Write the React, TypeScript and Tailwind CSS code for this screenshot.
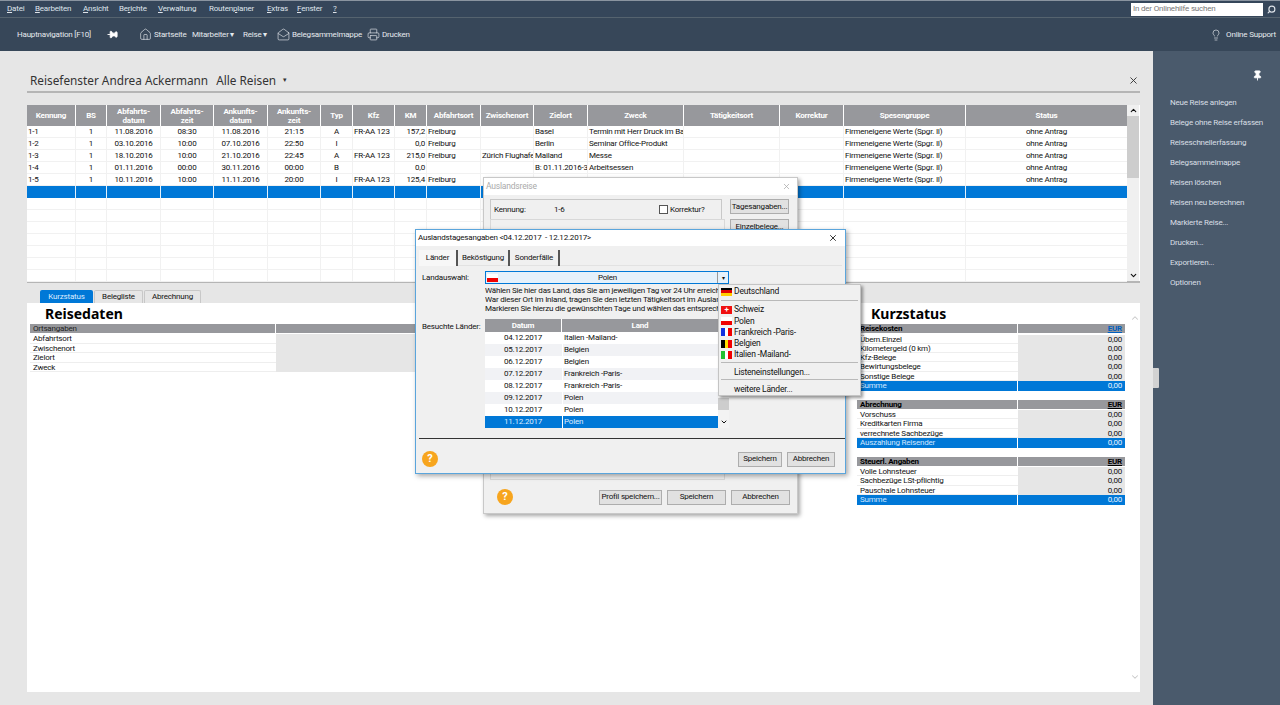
import React from "react";
import { ChevronDown, ChevronUp, House, Lightbulb, MailOpen, Pin, Printer, Search, X } from "lucide-react";

const menus = [
  { label: "Datei", key: "D", w: "w-[28px]" },
  { label: "Bearbeiten", key: "B", w: "w-[48px]" },
  { label: "Ansicht", key: "A", w: "w-[36px]" },
  { label: "Berichte", key: "r", w: "w-[39px]" },
  { label: "Verwaltung", key: "V", w: "w-[51px]" },
  { label: "Routenplaner", key: "p", w: "w-[58px]" },
  { label: "Extras", key: "E", w: "w-[30px]" },
  { label: "Fenster", key: "F", w: "w-[36px]" },
  { label: "?", key: "?", w: "w-[10px]" },
];

const sideItems = [
  "Neue Reise anlegen",
  "Belege ohne Reise erfassen",
  "Reiseschnellerfassung",
  "Belegsammelmappe",
  "Reisen löschen",
  "Reisen neu berechnen",
  "Markierte Reise...",
  "Drucken...",
  "Exportieren...",
  "Optionen",
];

const cols = "grid grid-cols-[48px_30px_53px_52px_53px_52px_31px_41px_31px_53px_52px_53px_95px_95px_63px_121px_161px] gap-x-px";
const headers = [
  "Kennung", "BS", "Abfahrts-\ndatum", "Abfahrts-\nzeit", "Ankunfts-\ndatum", "Ankunfts-\nzeit", "Typ", "Kfz", "KM",
  "Abfahrtsort", "Zwischenort", "Zielort", "Zweck", "Tätigkeitsort", "Korrektur", "Spesengruppe", "Status",
];
const align = [
  "text-left", "text-center", "text-center", "text-center", "text-center", "text-center", "text-center", "text-left", "text-right",
  "text-left", "text-left", "text-left", "text-left", "text-left", "text-left", "text-left", "text-center",
];
const sp = "Firmeneigene Werte (Spgr. II)";
const trips = [
  ["1-1", "1", "11.08.2016", "08:30", "11.08.2016", "21:15", "A", "FR-AA 123", "157,2", "Freiburg", "", "Basel", "Termin mit Herr Druck im Basler Büro", "", "", sp, "ohne Antrag"],
  ["1-2", "1", "03.10.2016", "10:00", "07.10.2016", "22:50", "I", "", "0,0", "Freiburg", "", "Berlin", "Seminar Office-Produkt", "", "", sp, "ohne Antrag"],
  ["1-3", "1", "18.10.2016", "10:00", "21.10.2016", "22:45", "A", "FR-AA 123", "215,0", "Freiburg", "Zürich Flughafen", "Mailand", "Messe", "", "", sp, "ohne Antrag"],
  ["1-4", "1", "01.11.2016", "00:00", "30.11.2016", "00:00", "B", "", "0,0", "", "", "B: 01.11.2016-30", "Arbeitsessen", "", "", sp, "ohne Antrag"],
  ["1-5", "1", "10.11.2016", "10:00", "11.11.2016", "20:00", "I", "FR-AA 123", "125,4", "Freiburg", "", "", "", "", "", sp, "ohne Antrag"],
];
const blank = headers.map(() => "");

const days = [
  ["04.12.2017", "Italien -Mailand-"],
  ["05.12.2017", "Belgien"],
  ["06.12.2017", "Belgien"],
  ["07.12.2017", "Frankreich -Paris-"],
  ["08.12.2017", "Frankreich -Paris-"],
  ["09.12.2017", "Polen"],
  ["10.12.2017", "Polen"],
  ["11.12.2017", "Polen"],
];

const status = [
  { title: "Reisekosten", rows: ["Übern.Einzel", "Kilometergeld (0 km)", "Kfz-Belege", "Bewirtungsbelege", "Sonstige Belege"], total: "Summe", blue: true },
  { title: "Abrechnung", rows: ["Vorschuss", "Kreditkarten Firma", "verrechnete Sachbezüge"], total: "Auszahlung Reisender", blue: false },
  { title: "Steuerl. Angaben", rows: ["Volle Lohnsteuer", "Sachbezüge LSt-pflichtig", "Pauschale Lohnsteuer"], total: "Summe", blue: false },
];

const Flag = ({ c }: { c: string }) => {
  if (c === "de")
    return (
      <span className="flex h-[8px] w-[11px] flex-col">
        <span className="flex-1 bg-black" />
        <span className="flex-1 bg-[#e00000]" />
        <span className="flex-1 bg-[#ffcc00]" />
      </span>
    );
  if (c === "ch")
    return (
      <span className="flex h-[8px] w-[11px] items-center justify-center bg-[#f01010] text-[8px] font-bold leading-none text-white">+</span>
    );
  if (c === "pl")
    return (
      <span className="flex h-[8px] w-[11px] flex-col">
        <span className="flex-1 bg-white" />
        <span className="flex-1 bg-[#f00000]" />
      </span>
    );
  const stripes: Record<string, string[]> = {
    fr: ["bg-[#1030e0]", "bg-white", "bg-[#f00000]"],
    be: ["bg-black", "bg-[#ffdd00]", "bg-[#f00000]"],
    it: ["bg-[#20c030]", "bg-white", "bg-[#f00000]"],
  };
  return (
    <span className="flex h-[8px] w-[11px]">
      {stripes[c].map((s) => (
        <span key={s} className={`flex-1 ${s}`} />
      ))}
    </span>
  );
};

const Btn = ({ children, w }: { children: React.ReactNode; w: string }) => (
  <div className={`${w} flex h-[15px] items-center justify-center whitespace-nowrap border border-[#adadad] bg-[#e1e1e1] text-[8px] text-[#111]`}>{children}</div>
);

const Help = () => (
  <div className="flex h-[16px] w-[16px] items-center justify-center rounded-full bg-[#f7a51e] text-[11px] font-bold text-white">?</div>
);

export default function App() {
  return (
    <div className="relative flex h-[705px] w-[1280px] flex-col overflow-hidden bg-[#e6e6e6] font-['Roboto',sans-serif] text-[8px] tracking-[-0.2px] text-[#111]">
      {/* Menu */}
      <div className="flex h-[18px] shrink-0 items-center border-y border-b-[#55636f] border-t-[#8a94a0] bg-[#35465a] pl-[7px] text-[#dfe4ea]">
        {menus.map((m) => {
          const i = m.label.indexOf(m.key);
          return (
            <span key={m.label} className={m.w}>
              {m.label.slice(0, i)}
              <span className="underline">{m.key}</span>
              {m.label.slice(i + 1)}
            </span>
          );
        })}
        <div className="ml-auto mr-[3px] flex h-[13px] w-[132px] items-center bg-white px-[2px] text-[#777]">In der Onlinehilfe suchen</div>
        <Search size={9} strokeWidth={3} className="mr-[4px] ml-[1px] -scale-x-100 text-[#dfe4ea]" />
      </div>

      {/* Navigation */}
      <div className="flex h-[33px] shrink-0 items-center bg-[#374759] pl-[17px] text-[#e6eaee]">
        <span className="w-[90px]">Hauptnavigation [F10]</span>
        <Pin size={11} className="mr-[21px] rotate-90 fill-white text-white" />
        <House size={13} strokeWidth={1.2} className="mr-[2px]" />
        <span className="w-[38px]">Startseite</span>
        <span className="w-[51px]">Mitarbeiter ▾</span>
        <span className="w-[34px]">Reise ▾</span>
        <MailOpen size={13} strokeWidth={1.2} className="mr-[2px]" />
        <span className="w-[75px]">Belegsammelmappe</span>
        <Printer size={13} strokeWidth={1.2} className="mr-[2px]" />
        <span>Drucken</span>
        <Lightbulb size={12} strokeWidth={1.3} className="ml-auto mr-[4px]" />
        <span className="mr-[4px]">Online Support</span>
      </div>

      <div className="flex min-h-0 flex-1">
        {/* Main */}
        <div className="flex w-[1153px] flex-col pl-[27px] pr-[13px] pt-[21px]">
          <div className="flex h-[21px] items-center border-b-2 border-[#b5b5b5] pb-[2px] pl-[3px] font-['Noto_Sans',sans-serif] text-[11.8px] tracking-normal text-[#333]">
            <span>Reisefenster Andrea Ackermann</span>
            <span className="ml-[8px]">Alle Reisen</span>
            <span className="ml-[7px] text-[7px]">▾</span>
            <X size={11} className="ml-auto mr-[1px]" />
          </div>

          {/* Trips */}
          <div className="mt-[12px] flex h-[178px] border-b-2 border-[#b5b5b5] bg-white">
            <div className="w-[1100px]">
              <div className={`${cols} h-[21px] bg-white`}>
                {headers.map((h) => (
                  <div key={h} className="flex items-center justify-center whitespace-pre-line bg-[#97989c] text-center font-bold leading-[9px] text-white">
                    {h}
                  </div>
                ))}
              </div>
              {trips.map((r) => (
                <div key={r[0]} className={`${cols} h-[12px] border-b border-[#f1f1f1] bg-[#f1f1f1]`}>
                  {r.map((c, i) => (
                    <div key={i} className={`overflow-hidden whitespace-nowrap bg-white px-px leading-[11px] ${align[i]}`}>{c}</div>
                  ))}
                </div>
              ))}
              <div className={`${cols} h-[12px] bg-[#e5f1fb]`}>
                {blank.map((_, i) => (
                  <div key={i} className="bg-[#0078d7]" />
                ))}
              </div>
              {Array.from({ length: 7 }, (_, n) => (
                <div key={n} className={`${cols} h-[12px] border-b border-[#f1f1f1] bg-[#f1f1f1]`}>
                  {blank.map((_, i) => (
                    <div key={i} className="bg-white" />
                  ))}
                </div>
              ))}
            </div>
            <div className="flex w-[12px] flex-col items-center bg-[#f0f0f0]">
              <ChevronUp size={9} strokeWidth={3} className="h-[11px]" />
              <div className="h-[62px] w-full bg-[#cdcdcd]" />
              <ChevronDown size={9} strokeWidth={3} className="mt-auto h-[11px]" />
            </div>
          </div>

          {/* Tabs */}
          <div className="mt-[7px] flex h-[13px] items-end gap-px pl-[13px]">
            <div className="flex h-[13px] w-[53px] items-center justify-center rounded-t-[2px] bg-[#0078d7] text-[#dcecff]">Kurzstatus</div>
            <div className="flex h-[13px] w-[49px] items-center justify-center rounded-t-[2px] border border-b-0 border-[#c8c8c8] bg-[#e6e6e6]">Belegliste</div>
            <div className="flex h-[13px] w-[57px] items-center justify-center rounded-t-[2px] border border-b-0 border-[#c8c8c8] bg-[#e6e6e6]">Abrechnung</div>
          </div>

          {/* Report */}
          <div className="flex h-[389px] bg-white pl-[3px]">
            <div className="w-[815px] shrink-0">
              <div className="flex h-[21px] items-center pl-[15px] font-['Noto_Sans',sans-serif] text-[14px] font-bold tracking-normal text-black">Reisedaten</div>
              <div className="flex h-[9px] gap-px bg-white leading-[9px]">
                <div className="w-[245px] bg-[#97989c] pl-[3px] text-[#222]">Ortsangaben</div>
                <div className="flex-1 bg-[#97989c]" />
              </div>
              <div className="mt-px">
                {["Abfahrtsort", "Zwischenort", "Zielort", "Zweck"].map((t) => (
                  <div key={t} className="flex h-[9.5px] leading-[9px]">
                    <div className="w-[246px] border-b border-[#eee] pl-[3px]">{t}</div>
                    <div className="flex-1 bg-[#e6e6e6]" />
                  </div>
                ))}
              </div>
            </div>
            <div className="ml-[12px] w-[268px] shrink-0">
              <div className="flex h-[21px] items-center pl-[14px] font-['Noto_Sans',sans-serif] text-[14px] font-bold tracking-normal text-black">Kurzstatus</div>
              {status.map((s) => (
                <div key={s.title} className="mb-[9px]">
                  <div className="flex h-[9px] gap-px font-bold leading-[9px] text-black">
                    <div className="w-[160px] bg-[#97989c] pl-[3px]">{s.title}</div>
                    <div className={`flex-1 bg-[#97989c] pr-[3px] text-right underline ${s.blue ? "text-[#0060c0]" : ""}`}>EUR</div>
                  </div>
                  <div className="mt-[1.5px]">
                    {s.rows.map((t) => (
                      <div key={t} className="flex h-[9.33px] leading-[9px]">
                        <div className="w-[161px] border-b border-[#eee] pl-[3px]">{t}</div>
                        <div className="flex-1 bg-[#e6e6e6] pr-[3px] text-right">0,00</div>
                      </div>
                    ))}
                  </div>
                  <div className="flex h-[9.5px] gap-px leading-[9px] text-[#cfe6ff]">
                    <div className="w-[160px] bg-[#0078d7] pl-[3px]">{s.total}</div>
                    <div className="flex-1 bg-[#0078d7] pr-[3px] text-right text-[#e8f3ff]">0,00</div>
                  </div>
                </div>
              ))}
            </div>
            <div className="ml-[5px] flex w-[10px] flex-col items-center bg-white py-[10px] text-[#c8c8c8]">
              <ChevronUp size={10} strokeWidth={2.5} />
              <ChevronDown size={10} strokeWidth={2.5} className="mt-auto" />
            </div>
          </div>
        </div>

        {/* Sidebar */}
        <div className="relative flex w-[127px] flex-col bg-[#4a5a6c] pl-[17px] pt-[19px] text-[#d9dfe5]">
          <Pin size={11} className="mb-[16px] ml-[82px] fill-white text-white" />
          <div className="flex flex-col gap-[9px] text-[8px] leading-[11px]">
            {sideItems.map((s) => (
              <span key={s}>{s}</span>
            ))}
          </div>
          <div className="absolute left-0 top-[317px] h-[20px] w-[6px] rounded-r-[1px] bg-[#d2d2d2]" />
        </div>
      </div>

      {/* Auslandsreise dialog behind */}
      <div className="absolute left-[483px] top-[177px] flex h-[337px] w-[315px] flex-col border border-[#c8c8c8] bg-[#f0f0f0] shadow-[2px_2px_4px_rgba(0,0,0,0.35)]">
        <div className="flex h-[17px] items-center justify-between bg-white pl-[2px] pr-[6px] text-[8.5px] text-[#aaa]">
          <span>Auslandsreise</span>
          <X size={9} className="text-[#aaa]" />
        </div>
        <div className="flex flex-1 flex-col px-[6px] pb-[8px] pt-[4px]">
          <div className="flex gap-[8px]">
            <div className="flex h-[21px] w-[232px] items-center border border-[#c8c8c8] pl-[3px]">
              <span className="w-[60px]">Kennung:</span>
              <span className="w-[105px]">1-6</span>
              <span className="mr-[2px] h-[9px] w-[9px] border border-[#555] bg-white" />
              <span>Korrektur?</span>
            </div>
            <div className="flex flex-col gap-[5px]">
              <Btn w="w-[59px]">Tagesangaben...</Btn>
              <Btn w="w-[59px]">Einzelbelege...</Btn>
            </div>
          </div>
          <div className="mt-[-15px] mb-[9px] h-[257px] w-[235px] flex-1 border border-[#d8d8d8]" />
          <div className="flex items-center pl-[7px] pr-[1px]">
            <Help />
            <div className="ml-auto flex gap-[5px]">
              <Btn w="w-[63px]">Profil speichern...</Btn>
              <Btn w="w-[59px]">Speichern</Btn>
              <Btn w="w-[59px]">Abbrechen</Btn>
            </div>
          </div>
        </div>
      </div>

      {/* Auslandstagesangaben dialog */}
      <div className="absolute left-[415px] top-[229px] flex h-[245px] w-[431px] flex-col border border-[#5aa5dc] bg-[#f0f0f0] shadow-[2px_2px_5px_rgba(0,0,0,0.35)]">
        <div className="flex h-[16px] shrink-0 items-center justify-between bg-white pl-[2px] pr-[7px]">
          <span>Auslandstagesangaben &lt;04.12.2017&nbsp; - 12.12.2017&gt;</span>
          <X size={10} />
        </div>
        <div className="mx-[3px] mt-[4px] flex h-[16px] shrink-0 items-center border-b border-[#e2e2e2]">
          <span className="flex h-[16px] w-[39px] items-center justify-center border-r-2 border-[#555] bg-[#f7f7f7]">Länder</span>
          <span className="flex h-[16px] w-[52px] items-center justify-center border-r-2 border-[#555]">Beköstigung</span>
          <span className="flex h-[16px] w-[50px] items-center justify-center border-r-2 border-[#555]">Sonderfälle</span>
        </div>
        <div className="mt-[5px] flex h-[13px] shrink-0 items-center pl-[6px]">
          <span className="w-[63px]">Landauswahl:</span>
          <div className="flex h-[13px] w-[244px] items-center border border-[#0078d7] bg-[#e5f1fb] pl-px">
            <Flag c="pl" />
            <span className="flex-1 text-center">Polen</span>
            <span className="flex h-[11px] w-[11px] items-center justify-center border-l border-[#999] text-[6px]">▾</span>
          </div>
        </div>
        <div className="mt-[2px] h-[33px] shrink-0 whitespace-nowrap pl-[69px] leading-[9px]">
          <div className="w-[233px] overflow-hidden">Wählen Sie hier das Land, das Sie am jeweiligen Tag vor 24 Uhr erreicht haben.</div>
          <div className="w-[233px] overflow-hidden">War dieser Ort im Inland, tragen Sie den letzten Tätigkeitsort im Ausland ein.</div>
          <div className="w-[233px] overflow-hidden">Markieren Sie hierzu die gewünschten Tage und wählen das entsprechende Land.</div>
        </div>
        <div className="flex shrink-0 pl-[6px]">
          <span className="w-[63px] whitespace-nowrap pt-[2px]">Besuchte Länder:</span>
          <div className="w-[233px]">
            <div className="flex h-[13px] gap-px bg-white font-bold text-white">
              <div className="flex w-[76px] items-center justify-center bg-[#97989c]">Datum</div>
              <div className="flex flex-1 items-center justify-center bg-[#97989c]">Land</div>
            </div>
            {days.map(([d, l], i) => (
              <div
                key={d}
                className={`flex h-[12px] items-center gap-px ${i === 7 ? "bg-[#0078d7] text-[#dcecff]" : i % 2 ? "bg-[#f1f2f5]" : "bg-white"}`}
              >
                <span className="w-[76px] text-center">{d}</span>
                <span className="flex-1 border-l border-white pl-px">{l}</span>
              </div>
            ))}
          </div>
          <div className="flex w-[11px] flex-col items-center justify-end bg-[#f3f3f3]">
            <div className="mb-[8px] h-[12px] w-full bg-[#cdcdcd]" />
            <ChevronDown size={8} strokeWidth={3} className="mb-[2px]" />
          </div>
        </div>
        <div className="ml-[3px] mt-[10px] h-px shrink-0 bg-[#333]" />
        <div className="flex flex-1 items-center px-[6px] pr-[10px] pt-[6px]">
          <Help />
          <div className="ml-auto flex gap-[5px]">
            <Btn w="w-[44px]">Speichern</Btn>
            <Btn w="w-[48px]">Abbrechen</Btn>
          </div>
        </div>
      </div>

      {/* Country dropdown */}
      <div className="absolute left-[718px] top-[284px] h-[112px] w-[143px] border border-[#c4c4c4] bg-[#f0f0f0] pt-px text-[8.5px] shadow-[2px_2px_3px_rgba(0,0,0,0.4)]">
        <div className="flex h-[11px] items-center gap-[2px] pl-[2px]"><Flag c="de" />Deutschland</div>
        <div className="mx-[2px] my-[3px] h-px bg-[#b9b9b9]" />
        {[["ch", "Schweiz"], ["pl", "Polen"], ["fr", "Frankreich -Paris-"], ["be", "Belgien"], ["it", "Italien -Mailand-"]].map(([c, t]) => (
          <div key={c} className="flex h-[11.3px] items-center gap-[2px] pl-[2px]"><Flag c={c} />{t}</div>
        ))}
        <div className="mx-[2px] my-[2px] h-px bg-[#b9b9b9]" />
        <div className="mt-[3px] flex h-[11px] items-center pl-[15px]">Listeneinstellungen...</div>
        <div className="mx-[2px] my-[2px] h-px bg-[#b9b9b9]" />
        <div className="mt-[3px] flex h-[11px] items-center pl-[15px]">weitere Länder...</div>
      </div>
    </div>
  );
}
